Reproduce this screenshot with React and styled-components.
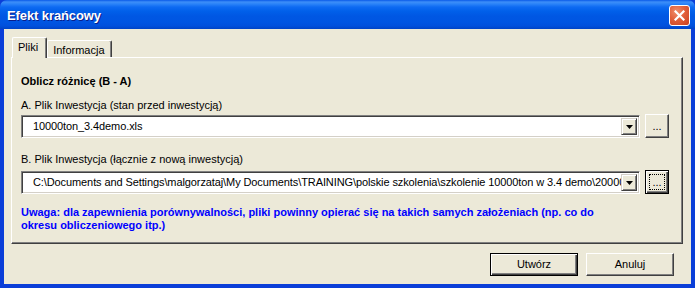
import React from "react";
import styled, { createGlobalStyle } from "styled-components";

const Global = createGlobalStyle`
  html, body {
    margin: 0;
    padding: 0;
    background: #ffffff;
  }
  body {
    font-family: "Liberation Sans", Arial, sans-serif;
    font-size: 11px;
    color: #000;
  }
`;

const Window = styled.div`
  width: 695px;
  height: 288px;
  display: flex;
  flex-direction: column;
  box-sizing: border-box;
  background: #0a3ed8;
`;

const TitleBar = styled.div`
  height: 29px;
  flex: none;
  display: flex;
  align-items: center;
  justify-content: space-between;
  padding: 0 5px 0 7px;
  box-sizing: border-box;
  border-radius: 7px 7px 0 0;
  background: linear-gradient(
    to bottom,
    #0a5ae8 0px,
    #3d8ef8 2px,
    #2a83f8 4px,
    #0e6af2 7px,
    #0160ea 11px,
    #0057e3 16px,
    #0055e2 22px,
    #0150dc 26px,
    #0043c6 29px
  );
`;

const Title = styled.span`
  color: #fff;
  font-family: "Liberation Sans", Arial, sans-serif;
  font-weight: bold;
  font-size: 13px;
  letter-spacing: -0.1px;
  text-shadow: 1px 1px 0 #0a1e8a;
  padding-top: 1px;
`;

const CloseButton = styled.div`
  width: 21px;
  height: 21px;
  box-sizing: border-box;
  border: 1px solid #fff;
  border-radius: 3px;
  background: radial-gradient(circle at 35% 30%, #ef8f6c 0%, #e2603b 45%, #c9401f 100%);
  display: flex;
  align-items: center;
  justify-content: center;
  margin-top: 1px;
`;

const Body = styled.div`
  flex: 1;
  display: flex;
  flex-direction: column;
  background: #ece9d8;
  margin: 0 4px 4px 4px;
  padding: 8px 8px 0 7px;
`;

const TabStrip = styled.div`
  display: flex;
  align-items: flex-end;
  height: 20px;
  padding-left: 1px;
  position: relative;
  z-index: 1;
`;

const Tab = styled.div`
  box-sizing: border-box;
  height: ${(p) => (p.$active ? "21px" : "17px")};
  margin-bottom: ${(p) => (p.$active ? "-1px" : "0")};
  padding: ${(p) => (p.$active ? "3px 8px 0 5px" : "3px 6px 0 5px")};
  background: #ece9d8;
  border-top: 1px solid #fff;
  border-left: 1px solid #fff;
  border-right: 1px solid #404040;
  box-shadow: inset -1px 0 0 #808080;
  border-radius: 2px 2px 0 0;
  white-space: nowrap;
`;

const Panel = styled.div`
  box-sizing: border-box;
  height: 187px;
  border-top: 1px solid #fff;
  border-left: 1px solid #fff;
  border-right: 1px solid #404040;
  border-bottom: 1px solid #404040;
  box-shadow: inset -1px -1px 0 #808080;
  display: flex;
  flex-direction: column;
  padding: 0 0 0 9px;
`;

const Heading = styled.div`
  font-weight: bold;
  line-height: 13px;
  margin-top: 17px;
`;

const Label = styled.div`
  line-height: 13px;
  margin-top: ${(p) => p.$top}px;
`;

const FieldRow = styled.div`
  display: flex;
  align-items: flex-end;
  gap: 5px;
  margin-top: ${(p) => p.$top}px;
  height: 24px;
`;

const Combo = styled.div`
  width: 619px;
  height: 23px;
  box-sizing: border-box;
  background: #fff;
  border-top: 1px solid #808080;
  border-left: 1px solid #808080;
  border-right: 1px solid #fff;
  border-bottom: 1px solid #fff;
  box-shadow: inset 1px 1px 0 #404040, inset -1px -1px 0 #d4d0c8;
  display: flex;
  align-items: center;
  padding: 2px;
`;

const ComboText = styled.div`
  flex: 1;
  overflow: hidden;
  white-space: nowrap;
  padding-left: 9px;
  line-height: 17px;
  letter-spacing: -0.1px;
`;

const DropButton = styled.div`
  width: 16px;
  height: 17px;
  flex: none;
  box-sizing: border-box;
  background: #ece9d8;
  border-top: 1px solid #d4d0c8;
  border-left: 1px solid #d4d0c8;
  border-right: 1px solid #404040;
  border-bottom: 1px solid #404040;
  box-shadow: inset 1px 1px 0 #fff, inset -1px -1px 0 #808080;
  display: flex;
  align-items: center;
  justify-content: center;
`;

const RaisedButton = styled.div`
  box-sizing: border-box;
  width: ${(p) => p.$w}px;
  height: ${(p) => p.$h}px;
  background: #ece9d8;
  border: 1px solid;
  border-color: ${(p) => (p.$default ? "#000" : "#fff #404040 #404040 #fff")};
  box-shadow: ${(p) =>
    p.$default
      ? "inset 1px 1px 0 #fff, inset -1px -1px 0 #404040, inset -2px -2px 0 #808080"
      : "inset -1px -1px 0 #808080"};
  display: flex;
  align-items: center;
  justify-content: center;
  padding: 3px;
`;

const FocusRing = styled.div`
  flex: 1;
  align-self: stretch;
  display: flex;
  align-items: flex-end;
  justify-content: center;
  outline: ${(p) => (p.$on ? "1px dotted #000" : "none")};
  outline-offset: -1px;
  padding-bottom: 2px;
  line-height: 11px;
`;

const ButtonLabel = styled.span`
  line-height: 13px;
`;

const Note = styled.div`
  margin-top: 12px;
  color: #0000ff;
  font-weight: bold;
  line-height: 13px;
`;

const Footer = styled.div`
  display: flex;
  justify-content: flex-end;
  gap: 8px;
  margin-top: 9px;
  padding-right: 9px;
`;

const Arrow = () => (
  <svg width="7" height="4" viewBox="0 0 7 4">
    <path d="M0 0h7L3.5 4z" fill="#000" />
  </svg>
);

const CloseX = () => (
  <svg width="11" height="11" viewBox="0 0 11 11">
    <path d="M1.5 1.5l8 8M9.5 1.5l-8 8" stroke="#fff" strokeWidth="2.2" strokeLinecap="square" />
  </svg>
);

const FileField = ({ value, focused, top }) => (
  <FieldRow $top={top}>
    <Combo>
      <ComboText>{value}</ComboText>
      <DropButton>
        <Arrow />
      </DropButton>
    </Combo>
    <RaisedButton $w={24} $h={24} $default={focused}>
      <FocusRing $on={focused}>...</FocusRing>
    </RaisedButton>
  </FieldRow>
);

export default function App() {
  return (
    <>
      <Global />
      <Window>
        <TitleBar>
          <Title>Efekt krańcowy</Title>
          <CloseButton>
            <CloseX />
          </CloseButton>
        </TitleBar>
        <Body>
          <TabStrip>
            <Tab $active>Pliki</Tab>
            <Tab>Informacja</Tab>
          </TabStrip>
          <Panel>
            <Heading>Oblicz różnicę (B - A)</Heading>
            <Label $top={11}>A. Plik Inwestycja (stan przed inwestycją)</Label>
            <FileField top={2} value="10000ton_3.4demo.xls" />
            <Label $top={15}>B. Plik Inwestycja (łącznie z nową inwestycją)</Label>
            <FileField
              top={4}
              focused
              value="C:\Documents and Settings\malgorzataj\My Documents\TRAINING\polskie szkolenia\szkolenie 10000ton w 3.4 demo\20000"
            />
            <Note>
              Uwaga: dla zapewnienia porównywalności, pliki powinny opierać się na takich samych założeniach (np. co do
              <br />
              okresu obliczeniowego itp.)
            </Note>
          </Panel>
          <Footer>
            <RaisedButton $w={88} $h={23} $default>
              <ButtonLabel>Utwórz</ButtonLabel>
            </RaisedButton>
            <RaisedButton $w={88} $h={23}>
              <ButtonLabel>Anuluj</ButtonLabel>
            </RaisedButton>
          </Footer>
        </Body>
      </Window>
    </>
  );
}
